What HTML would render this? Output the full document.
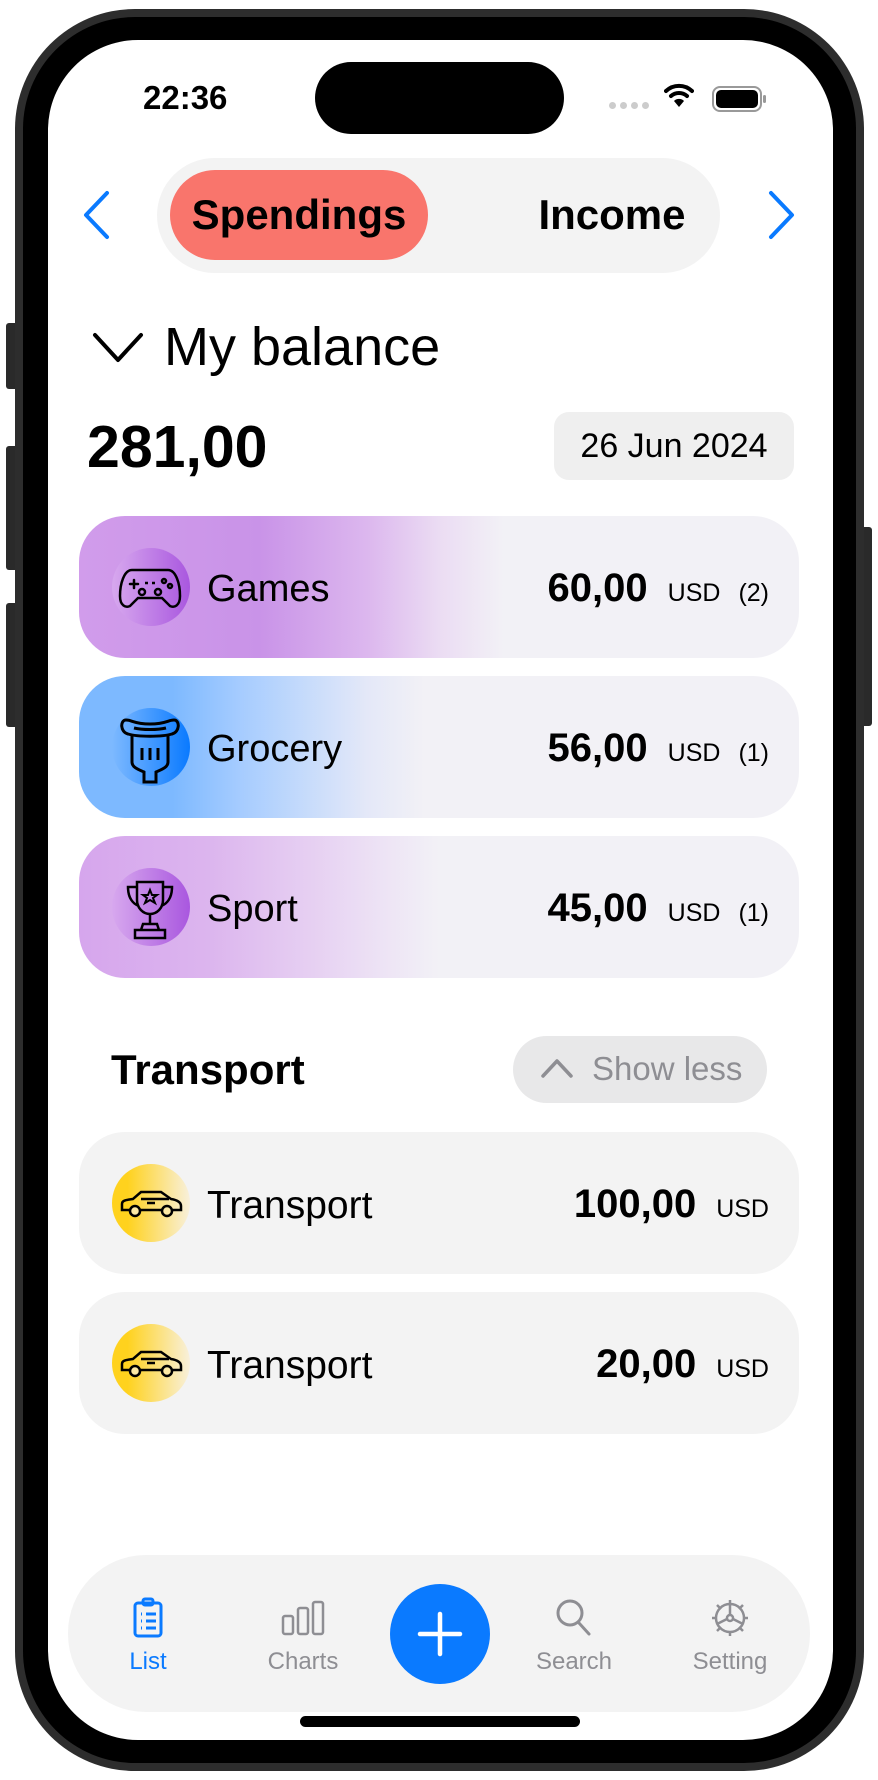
<!DOCTYPE html>
<html><head><meta charset="utf-8"><style>
*{margin:0;padding:0;box-sizing:border-box}
body{width:878px;height:1780px;background:#fff;position:relative;overflow:hidden;font-family:"Liberation Sans",sans-serif;color:#000}
.a{position:absolute}
.card{position:absolute;left:79px;width:720px;height:142px;border-radius:46px;background:#f2f1f6}
.ic{position:absolute;left:33px;top:32px;width:78px;height:78px;border-radius:50%}
.nm{position:absolute;left:128px;top:52px;font-size:38px}
.rt{position:absolute;right:30px;top:50px;display:flex;align-items:baseline;white-space:nowrap}
.amt{font-size:40px;font-weight:bold}
.usd{font-size:25px;margin-left:20px}
.cnt{font-size:25px;margin-left:18px}
.tab{position:absolute;top:1594px;width:130px;text-align:center;font-size:24px;color:#8e8e93}
.tab .ib{height:48px;display:flex;align-items:center;justify-content:center;margin-bottom:6px}
</style></head><body>
<div class="a" style="left:6px;top:323px;width:12px;height:66px;background:#2a2a2a;border-radius:3px"></div>
<div class="a" style="left:6px;top:446px;width:12px;height:124px;background:#2a2a2a;border-radius:3px"></div>
<div class="a" style="left:6px;top:603px;width:12px;height:124px;background:#2a2a2a;border-radius:3px"></div>
<div class="a" style="left:860px;top:527px;width:12px;height:199px;background:#2a2a2a;border-radius:3px"></div>
<div class="a" style="left:15px;top:9px;width:849px;height:1762px;border-radius:120px;background:#2d2d2d"></div>
<div class="a" style="left:23px;top:17px;width:833px;height:1746px;border-radius:112px;background:#000"></div>
<div class="a" style="left:48px;top:40px;width:785px;height:1700px;border-radius:90px;background:#fff"></div>
<div class="a" style="left:315px;top:62px;width:249px;height:72px;border-radius:36px;background:#000"></div>
<div class="a" style="left:143px;top:79px;font-size:33px;font-weight:bold">22:36</div>
<div class="a" style="left:609px;top:102px;display:flex;gap:4px"><i style="width:7px;height:7px;border-radius:50%;background:#ccc;display:block"></i><i style="width:7px;height:7px;border-radius:50%;background:#ccc;display:block"></i><i style="width:7px;height:7px;border-radius:50%;background:#ccc;display:block"></i><i style="width:7px;height:7px;border-radius:50%;background:#ccc;display:block"></i></div>
<svg class="a" style="left:664px;top:82px" width="30" height="26" viewBox="0 0 30 26"><path d="M2 9 A19 19 0 0 1 28 9" stroke="#000" stroke-width="4" fill="none" stroke-linecap="round"/><path d="M7 14 A12 12 0 0 1 23 14" stroke="#000" stroke-width="4" fill="none" stroke-linecap="round"/><path d="M15 25 L10 19 A7 7 0 0 1 20 19 Z" fill="#000"/></svg>
<div class="a" style="left:712px;top:86px;width:50px;height:26px;border:2px solid #999;border-radius:8px"></div>
<div class="a" style="left:716px;top:90px;width:42px;height:18px;background:#000;border-radius:5px"></div>
<div class="a" style="left:763px;top:95px;width:3px;height:8px;background:#999;border-radius:2px"></div>
<svg class="a" style="left:80px;top:189px" width="32" height="52" viewBox="0 0 32 52"><path d="M27 4 L6 26 L27 48" stroke="#0a7aff" stroke-width="4" fill="none" stroke-linecap="round" stroke-linejoin="round"/></svg>
<svg class="a" style="left:766px;top:189px" width="32" height="52" viewBox="0 0 32 52"><path d="M5 4 L26 26 L5 48" stroke="#0a7aff" stroke-width="4" fill="none" stroke-linecap="round" stroke-linejoin="round"/></svg>
<div class="a" style="left:157px;top:158px;width:563px;height:115px;border-radius:58px;background:#f3f3f3"></div>
<div class="a" style="left:170px;top:170px;width:258px;height:90px;border-radius:45px;background:#f9756c"></div>
<div class="a" style="left:160px;top:191px;width:278px;text-align:center;font-size:42px;font-weight:bold">Spendings</div>
<div class="a" style="left:512px;top:191px;width:200px;text-align:center;font-size:42px;font-weight:bold">Income</div>
<svg class="a" style="left:92px;top:330px" width="52" height="36" viewBox="0 0 52 36"><path d="M3 5 L26 30 L49 5" stroke="#000" stroke-width="4" fill="none" stroke-linecap="round" stroke-linejoin="round"/></svg>
<div class="a" style="left:164px;top:316px;font-size:54px">My balance</div>
<div class="a" style="left:87px;top:413px;font-size:59px;font-weight:bold">281,00</div>
<div class="a" style="left:554px;top:412px;width:240px;height:68px;border-radius:15px;background:#efefef;text-align:center;line-height:68px;font-size:34px">26 Jun 2024</div>
<div class="card" style="top:516px;background:linear-gradient(90deg,#d19ceb 0%,#c993e8 25%,#dcb7ee 40%,#ebdcf3 50%,#f2f1f6 59%)">
 <div class="ic" style="background:linear-gradient(90deg,#d7a8ee,#a957df)"></div>
 <svg class="a" style="left:39px;top:48px" width="64" height="46" viewBox="0 0 64 46" fill="none" stroke="#000" stroke-width="2.5"><path d="M14 6 H50 C58 6 62 20 62 32 C62 42 56 44 52 42 L44 34 H20 L12 42 C8 44 2 42 2 32 C2 20 6 6 14 6 Z"/><path d="M12 20 H20 M16 16 V24" stroke-linecap="round"/><circle cx="46" cy="17" r="2"/><circle cx="52" cy="22" r="2"/><circle cx="24" cy="28" r="3"/><circle cx="40" cy="28" r="3"/><path d="M27 19 h3 M34 19 h3"/></svg>
 <div class="nm">Games</div>
 <div class="rt"><span class="amt">60,00</span><span class="usd">USD</span><span class="cnt">(2)</span></div>
</div>
<div class="card" style="top:676px;background:linear-gradient(90deg,#7db9ff 0%,#7db9ff 13%,#a4cbff 22%,#c8dcfb 32%,#e4e8f8 40%,#f2f1f6 48%)">
 <div class="ic" style="background:linear-gradient(90deg,#7db9ff,#0a7aff)"></div>
 <svg class="a" style="left:39px;top:36px" width="64" height="80" viewBox="0 0 64 80" fill="none" stroke="#000" stroke-width="3"><path d="M8 8 C2 8 2 20 10 22 C20 25 44 25 54 22 C62 20 62 8 56 8 C50 8 48 12 32 12 C16 12 14 8 8 8 Z"/><path d="M16 16 C24 18 40 18 48 16"/><path d="M14 24 V50 C14 56 22 58 26 60 V70 H38 V60 C42 58 50 56 50 50 V24"/><path d="M24 36 V48 M32 36 V48 M40 36 V48"/></svg>
 <div class="nm">Grocery</div>
 <div class="rt"><span class="amt">56,00</span><span class="usd">USD</span><span class="cnt">(1)</span></div>
</div>
<div class="card" style="top:836px;background:linear-gradient(90deg,#d6a6ed 0%,#dcb5ee 18%,#e6cff2 32%,#ede3f5 42%,#f2f1f6 50%)">
 <div class="ic" style="background:linear-gradient(90deg,#d7a8ee,#a957df)"></div>
 <svg class="a" style="left:44px;top:42px" width="54" height="64" viewBox="0 0 54 64" fill="none" stroke="#000" stroke-width="2.5"><path d="M14 4 H40 V22 C40 30 34 36 27 36 C20 36 14 30 14 22 Z"/><path d="M14 9 H5 C5 20 10 26 16 28 M40 9 H49 C49 20 44 26 38 28"/><path d="M27 36 V46 M20 46 H34 L36 52 H18 Z M12 52 H42 V60 H12 Z"/><path d="M27 12 L29 17 L34 17 L30 20 L32 25 L27 22 L22 25 L24 20 L20 17 L25 17 Z" stroke-width="2"/></svg>
 <div class="nm">Sport</div>
 <div class="rt"><span class="amt">45,00</span><span class="usd">USD</span><span class="cnt">(1)</span></div>
</div>
<div class="a" style="left:111px;top:1046px;font-size:42px;font-weight:bold">Transport</div>
<div class="a" style="left:513px;top:1036px;width:254px;height:67px;border-radius:34px;background:#e8e8e9"></div>
<svg class="a" style="left:540px;top:1056px" width="34" height="24" viewBox="0 0 34 24"><path d="M3 20 L17 5 L31 20" stroke="#8e8e93" stroke-width="3.5" fill="none" stroke-linecap="round" stroke-linejoin="round"/></svg>
<div class="a" style="left:592px;top:1050px;font-size:33px;color:#8e8e93">Show less</div>
<div class="card" style="top:1132px;background:#f3f3f3">
 <div class="ic" style="background:linear-gradient(90deg,#ffd21e 20%,#f8f0dc 100%)"></div>
 <svg class="a" style="left:40px;top:56px" width="64" height="32" viewBox="0 0 64 32" fill="none" stroke="#000" stroke-width="2.5"><path d="M3 22 V16 C3 12 8 12 14 11 L22 4 H42 L52 11 C58 12 62 14 62 18 V22 Z"/><path d="M22 11 H50"/><circle cx="16" cy="23" r="5" fill="#fce9a5"/><circle cx="48" cy="23" r="5" fill="#fce9a5"/><path d="M28 15 h8"/></svg>
 <div class="nm" style="font-size:39px">Transport</div>
 <div class="rt"><span class="amt">100,00</span><span class="usd">USD</span></div>
</div>
<div class="card" style="top:1292px;background:#f3f3f3">
 <div class="ic" style="background:linear-gradient(90deg,#ffd21e 20%,#f8f0dc 100%)"></div>
 <svg class="a" style="left:40px;top:56px" width="64" height="32" viewBox="0 0 64 32" fill="none" stroke="#000" stroke-width="2.5"><path d="M3 22 V16 C3 12 8 12 14 11 L22 4 H42 L52 11 C58 12 62 14 62 18 V22 Z"/><path d="M22 11 H50"/><circle cx="16" cy="23" r="5" fill="#fce9a5"/><circle cx="48" cy="23" r="5" fill="#fce9a5"/><path d="M28 15 h8"/></svg>
 <div class="nm" style="font-size:39px">Transport</div>
 <div class="rt"><span class="amt">20,00</span><span class="usd">USD</span></div>
</div>
<div class="a" style="left:68px;top:1555px;width:742px;height:157px;border-radius:78px;background:#f3f3f3"></div>
<div class="tab" style="left:83px;color:#0a7aff"><div class="ib"><svg width="32" height="42" viewBox="0 0 32 42" fill="none" stroke="#0a7aff" stroke-width="3"><rect x="3" y="6" width="26" height="33" rx="3"/><rect x="11" y="2" width="10" height="6" rx="2"/><path d="M9 17h1 M9 24h1 M9 31h1 M14 17h10 M14 24h10 M14 31h10"/></svg></div>List</div>
<div class="tab" style="left:238px"><div class="ib"><svg width="44" height="36" viewBox="0 0 44 36" fill="none" stroke="#8e8e93" stroke-width="2.5"><rect x="2" y="16" width="10" height="18" rx="2"/><rect x="17" y="8" width="10" height="26" rx="2"/><rect x="32" y="2" width="10" height="32" rx="2"/></svg></div>Charts</div>
<div class="a" style="left:390px;top:1584px;width:100px;height:100px;border-radius:50%;background:#0a7aff"></div>
<svg class="a" style="left:415px;top:1609px" width="50" height="50" viewBox="0 0 50 50"><path d="M25 5V45M5 25H45" stroke="#fff" stroke-width="4.5" stroke-linecap="round"/></svg>
<div class="tab" style="left:509px"><div class="ib"><svg width="38" height="40" viewBox="0 0 38 40" fill="none" stroke="#8e8e93" stroke-width="3"><circle cx="15" cy="15" r="12"/><path d="M24 25 L34 36" stroke-linecap="round"/></svg></div>Search</div>
<div class="tab" style="left:665px"><div class="ib"><svg width="40" height="40" viewBox="0 0 40 40" fill="none" stroke="#8e8e93" stroke-width="2.5"><circle cx="20" cy="20" r="14"/><path d="M20 2v5M20 33v5M2 20h5M33 20h5M7 7l4 4M29 29l4 4M7 33l4-4M29 11l4-4"/><circle cx="20" cy="20" r="3"/><path d="M20 17V6M23 21l10 5M17 21L7 26"/></svg></div>Setting</div>
<div class="a" style="left:300px;top:1716px;width:280px;height:11px;border-radius:6px;background:#000"></div>
</body></html>
